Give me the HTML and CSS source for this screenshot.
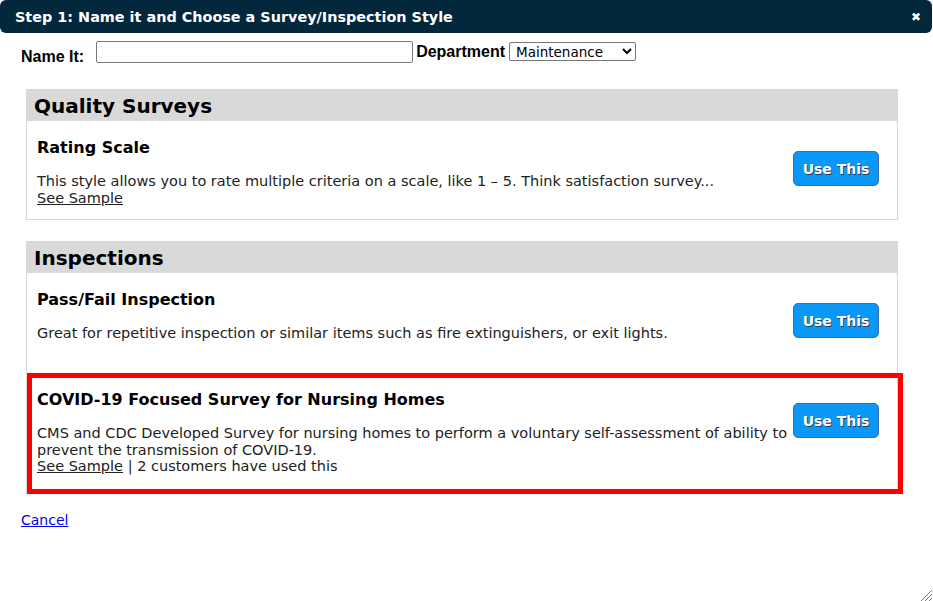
FILE: index.html
```html
<!DOCTYPE html>
<html lang="en">
<head>
  <meta charset="UTF-8" />
  <title>Step 1: Name it and Choose a Survey/Inspection Style</title>
  <link rel="stylesheet" href="styles.css">
</head>
<body>
  <div class="dialog">
    <div class="titlebar">
      <span class="title">Step 1: Name it and Choose a Survey/Inspection Style</span>
      <span class="close">&#10006;</span>
    </div>

    <div class="name-row">
      <label class="lbl lbl-name">Name It:</label>
      <input type="text" class="name-input">
      <label class="lbl lbl-dept">Department</label>
      <select class="dept">
        <option>Maintenance</option>
      </select>
    </div>

    <div class="section">
      <div class="section-head">Quality Surveys</div>
      <div class="item">
        <div class="item-text">
          <h3>Rating Scale</h3>
          <div class="desc">This style allows you to rate multiple criteria on a scale, like 1 &ndash; 5. Think satisfaction survey...</div>
          <div class="meta"><a href="#">See Sample</a></div>
        </div>
        <button class="use">Use This</button>
      </div>
    </div>

    <div class="section">
      <div class="section-head">Inspections</div>
      <div class="item">
        <div class="item-text">
          <h3>Pass/Fail Inspection</h3>
          <div class="desc">Great for repetitive inspection or similar items such as fire extinguishers, or exit lights.</div>
          <div class="meta">&nbsp;</div>
        </div>
        <button class="use">Use This</button>
      </div>
      <div class="item highlight">
        <div class="item-text">
          <h3>COVID-19 Focused Survey for Nursing Homes</h3>
          <div class="desc">CMS and CDC Developed Survey for nursing homes to perform a voluntary self-assessment of ability to prevent the transmission of COVID-19.</div>
          <div class="meta"><a href="#">See Sample</a> | 2 customers have used this</div>
        </div>
        <button class="use">Use This</button>
      </div>
    </div>

    <a href="#" class="cancel">Cancel</a>
  </div>

  <svg class="grip" width="12" height="12" viewBox="0 0 12 12">
    <g fill="#c0651c">
      <rect x="11" y="1" width="1" height="1"/><rect x="10" y="2" width="1" height="1"/>
      <rect x="9" y="3" width="1" height="1"/><rect x="8" y="4" width="1" height="1"/>
      <rect x="7" y="5" width="1" height="1"/><rect x="6" y="6" width="1" height="1"/>
      <rect x="5" y="7" width="1" height="1"/><rect x="4" y="8" width="1" height="1"/>
      <rect x="3" y="9" width="1" height="1"/><rect x="2" y="10" width="1" height="1"/>
      <rect x="1" y="11" width="1" height="1"/>
      <rect x="11" y="5" width="1" height="1"/><rect x="10" y="6" width="1" height="1"/>
      <rect x="9" y="7" width="1" height="1"/><rect x="8" y="8" width="1" height="1"/>
      <rect x="7" y="9" width="1" height="1"/><rect x="6" y="10" width="1" height="1"/>
      <rect x="5" y="11" width="1" height="1"/>
      <rect x="11" y="9" width="1" height="1"/><rect x="10" y="10" width="1" height="1"/>
      <rect x="9" y="11" width="1" height="1"/>
    </g>
  </svg>
</body>
</html>
```

FILE: styles.css
```css
* {
  box-sizing: border-box;
}

body {
  margin: 0;
  background: #fff;
  color: #222;
  font-family: 'DejaVu Sans', Verdana, sans-serif;
  font-size: 14.5px;
  width: 933px;
  height: 601px;
  position: relative;
  overflow: hidden;
}

.dialog {
  width: 932px;
}

.titlebar {
  height: 33px;
  background: #03283c;
  color: #fff;
  border-radius: 6px;
  display: flex;
  align-items: center;
  justify-content: space-between;
  padding: 0 11px 0 15px;
}

.title {
  font-weight: bold;
  font-size: 14.4px;
}

.close {
  font-size: 12px;
  font-weight: bold;
}

.name-row {
  display: flex;
  align-items: baseline;
  padding: 8px 0 0 21px;
  height: 30px;
}

.lbl {
  font-family: 'Liberation Sans', Arial, sans-serif;
  font-weight: bold;
  font-size: 16px;
  color: #000;
}

.lbl-name {
  position: relative;
  top: 5px;
}

.name-input {
  margin: 0 3px 0 12px;
  width: 317px;
  height: 22px;
  border: 1px solid #767676;
  border-radius: 2px;
}

.dept {
  margin-left: 4px;
  width: 127px;
  height: 19px;
  font-family: 'DejaVu Sans', Verdana, sans-serif;
  font-size: 13.5px;
  color: #000;
  border: 1px solid #767676;
  border-radius: 2px;
  background: #fff;
  padding: 0 2px;
}

.section {
  margin: 26px 0 0 26px;
  width: 872px;
  border: 1px solid #d6d6d6;
  border-top: none;
}

.section + .section {
  margin-top: 21px;
}

.section-head {
  background: #d9d9d9;
  height: 32px;
  padding: 0 8px;
  font-size: 20px;
  font-weight: bold;
  color: #000;
  line-height: 34px;
  margin: 0 -1px;
}

.item {
  display: flex;
  align-items: flex-start;
  justify-content: space-between;
  padding: 16px 18px 13px 10px;
}

.item h3 {
  margin: 0 0 15px;
  font-size: 16px;
  line-height: 21px;
  color: #000;
}

.desc,
.meta {
  line-height: 16.5px;
}

.meta a {
  color: #222;
}

.use {
  flex: none;
  margin-top: 14px;
  width: 86px;
  height: 35px;
  background: #0998f7;
  border: 1px solid #3c6bb0;
  border-radius: 5px;
  color: #fff;
  font-family: 'DejaVu Sans', Verdana, sans-serif;
  font-weight: bold;
  font-size: 14px;
  text-shadow: 1px 1px 0 #2a3a55;
  padding: 0;
}

.item.highlight {
  margin: 2px -6px -1px 0;
  border: 5px solid #f00;
  padding: 11px 19px 14px 5px;
}

.cancel {
  display: inline-block;
  margin: 18px 0 0 21px;
  font-size: 14px;
  line-height: 16px;
  color: #00e;
}

.grip {
  position: absolute;
  right: 1px;
  bottom: 0;
}
```
